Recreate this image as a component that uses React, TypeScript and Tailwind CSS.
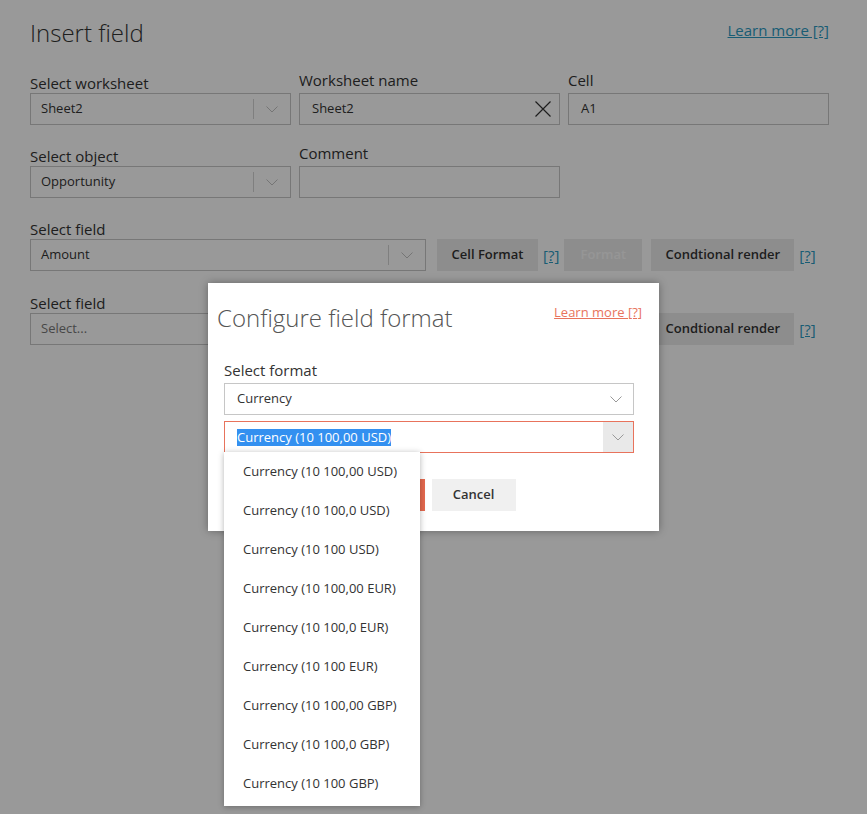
import React from 'react';

const Chevron = ({ className = '' }: { className?: string }) => (
  <svg width="12" height="7" viewBox="0 0 12 7" className={className}>
    <polyline points="0.5,0.5 6,6 11.5,0.5" fill="none" stroke="currentColor" strokeWidth="1" />
  </svg>
);

const SelectBox: React.FC<{ label: string; value: string; width: string; placeholder?: boolean }> = ({
  label,
  value,
  width,
  placeholder,
}) => (
  <div className={`flex flex-col ${width}`}>
    <label className="h-5 text-[15px] leading-5 text-[#333]">{label}</label>
    <div className="flex h-8 items-center border border-[#c6c6c6] bg-white">
      <span className={`flex-1 pl-[10px] text-[13px] ${placeholder ? 'text-[#777]' : 'text-[#333]'}`}>{value}</span>
      <span className="h-5 w-px bg-[#d4d4d4]" />
      <span className="flex w-9 items-center justify-center text-[#c4c4c4]">
        <Chevron />
      </span>
    </div>
  </div>
);

// text inputs put their label 3px higher than the selects do
const TextBox: React.FC<{ label: string; value?: string; clear?: boolean }> = ({ label, value, clear }) => (
  <div className="flex w-[261px] flex-col">
    <label className="-mt-[3px] mb-[3px] h-5 text-[15px] leading-5 text-[#333]">{label}</label>
    <div className="flex h-8 items-center border border-[#c6c6c6] bg-white">
      <span className="flex-1 pl-3 text-[13px] text-[#333]">{value}</span>
      {clear && (
        <svg width="16" height="16" viewBox="0 0 16 16" className="mr-[8px] text-[#333]">
          <path d="M0.5 0.5 L15.5 15.5 M15.5 0.5 L0.5 15.5" stroke="currentColor" strokeWidth="1.2" />
        </svg>
      )}
    </div>
  </div>
);

const Help = () => <a className="text-[15px] text-[#2b9ac2] underline">[?]</a>;

const FieldButtons = () => (
  <div className="flex items-center">
    <button className="ml-[11px] h-8 w-[101px] bg-[#ececec] text-[13px] font-semibold text-[#333]">Cell Format</button>
    <span className="ml-[5px]">
      <Help />
    </span>
    <button className="ml-[5px] h-8 w-[78px] bg-[#ececec] text-[13px] font-semibold text-[#fafafa]">Format</button>
    <button className="ml-[9px] h-8 w-[143px] bg-[#ececec] text-[13px] font-semibold text-[#333]">
      Condtional render
    </button>
    <span className="ml-[5px]">
      <Help />
    </span>
  </div>
);

const formats = [
  'Currency (10 100,00 USD)',
  'Currency (10 100,0 USD)',
  'Currency (10 100 USD)',
  'Currency (10 100,00 EUR)',
  'Currency (10 100,0 EUR)',
  'Currency (10 100 EUR)',
  'Currency (10 100,00 GBP)',
  'Currency (10 100,0 GBP)',
  'Currency (10 100 GBP)',
];

export default function App() {
  return (
    <div className="relative h-[814px] w-full overflow-hidden bg-white font-['Open_Sans',sans-serif]">
      {/* Page */}
      <div className="w-[829px] pl-[30px] pt-[17px]">
        <div className="flex items-start justify-between">
          <h1 className="text-[24px] font-light leading-8 text-[#333]">Insert field</h1>
          <a className="mt-[2px] text-[15px] text-[#2b9ac2] underline">Learn more [?]</a>
        </div>

        <div className="mt-[24px] flex flex-col gap-y-[21px]">
          <div className="flex items-end gap-x-2">
            <SelectBox label="Select worksheet" value="Sheet2" width="w-[261px]" />
            <TextBox label="Worksheet name" value="Sheet2" clear />
            <TextBox label="Cell" value="A1" />
          </div>
          <div className="flex items-end gap-x-2">
            <SelectBox label="Select object" value="Opportunity" width="w-[261px]" />
            <TextBox label="Comment" />
          </div>
          <div className="flex items-end">
            <SelectBox label="Select field" value="Amount" width="w-[396px]" />
            <FieldButtons />
          </div>
          <div className="mt-px flex items-end">
            <SelectBox label="Select field" value="Select..." width="w-[396px]" placeholder />
            <FieldButtons />
          </div>
        </div>
      </div>

      {/* Overlay */}
      <div className="absolute inset-0 bg-black/40" />

      {/* Dialog */}
      <div className="absolute left-[208px] top-[283px] w-[451px] bg-white pb-[20px] pl-[9px] pr-[17px] pt-[19px] shadow-[0_0_8px_rgba(0,0,0,0.35)]">
        <div className="flex items-start justify-between">
          <h2 className="text-[24px] font-light leading-8 text-[#555]">Configure field format</h2>
          <a className="mt-[1px] text-[13px] text-[#e8735c] underline">Learn more [?]</a>
        </div>

        <div className="ml-[7px] mr-[8px] mt-[26px]">
          <label className="block text-[15px] leading-5 text-[#333]">Select format</label>
          <div className="mt-[3px] flex h-8 items-center border border-[#c6c6c6]">
            <span className="flex-1 pl-3 text-[13px] text-[#333]">Currency</span>
            <span className="flex w-[31px] items-center justify-center text-[#999]">
              <Chevron className="mr-1" />
            </span>
          </div>

          <div className="relative mt-[6px] flex h-8 items-stretch border border-[#e8735c]">
            <span className="flex flex-1 items-center pl-3">
              <span className="bg-[#3390f0] text-[13px] leading-[17px] text-white">Currency (10 100,00 USD)</span>
            </span>
            <span className="flex w-[30px] items-center justify-center bg-[#e9e9e9] text-[#999]">
              <Chevron />
            </span>

            {/* Dropdown list */}
            <ul className="absolute left-[-1px] top-[30px] z-10 w-[196px] bg-white pb-[3px] shadow-[0_1px_6px_rgba(0,0,0,0.3)]">
              {formats.map((f) => (
                <li key={f} className="flex h-[39px] items-center pl-[19px] text-[13px] text-[#333]">
                  {f}
                </li>
              ))}
            </ul>
          </div>

          <div className="mt-[26px] flex justify-center gap-[7px] pr-[2px]">
            <button className="h-8 w-[84px] bg-[#e5694f] text-[13px] font-semibold text-white">OK</button>
            <button className="h-8 w-[84px] bg-[#f0f0f0] text-[13px] font-semibold text-[#333]">Cancel</button>
          </div>
        </div>
      </div>
    </div>
  );
}
